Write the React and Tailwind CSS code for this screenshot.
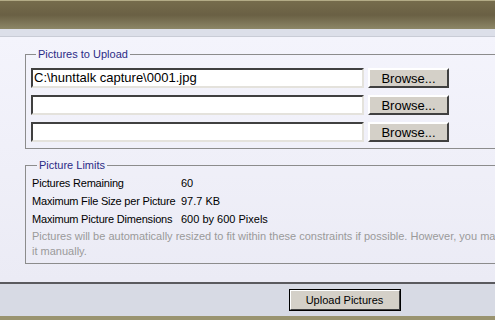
export default function App() {
  const rows = [
    ["Pictures Remaining", "60"],
    ["Maximum File Size per Picture", "97.7 KB"],
    ["Maximum Picture Dimensions", "600 by 600 Pixels"],
  ];

  const files = ["C:\\hunttalk capture\\0001.jpg", "", ""];

  return (
    <div className="w-[495px] h-[320px] overflow-hidden bg-[#f2f2fa] font-['Liberation_Sans',Arial,sans-serif]">
      {/* header */}
      <div className="h-[29px] border-t border-[#b3ab86] bg-gradient-to-b from-[#766c4c] via-[#6a6044] to-[#8d8767]" />
      <div className="h-[8px] bg-[#dcdfe9] border-b border-[#c9ccd6]" />

      {/* main */}
      <div className="h-[245px] bg-gradient-to-b from-[#f4f4fc] to-[#ebebf5] pl-[25px] pt-[11px]">
        <fieldset className="w-[520px] border border-[#8c8c8c] pl-[5px] pt-[7px] pb-[6px]">
          <legend className="ml-[5px] px-[2px] text-[11px] leading-[13px] text-[#2b2b86]">
            Pictures to Upload
          </legend>
          <div className="flex flex-col gap-[7px]">
            {files.map((f, i) => (
              <div key={i} className="flex items-center gap-[4px]">
                <div className="w-[333px] h-[20px] bg-white border-2 border-t-[#404040] border-l-[#404040] border-b-[#e4e2dc] border-r-[#e4e2dc] flex items-center px-[1px] text-[13px] text-black">
                  {f}
                </div>
                <button className="w-[81px] h-[20px] bg-[#d4d0c8] border-2 border-t-white border-l-white border-b-[#404040] border-r-[#404040] text-[13px] text-black leading-none">
                  Browse...
                </button>
              </div>
            ))}
          </div>
        </fieldset>

        <fieldset className="mt-[10px] w-[520px] border border-[#8c8c8c] pl-[6px] pt-[2px] pb-[4px] text-[11px]">
          <legend className="ml-[5px] px-[2px] text-[11px] leading-[13px] text-[#2b2b86]">
            Picture Limits
          </legend>
          {rows.map(([k, v]) => (
            <div key={k} className="flex h-[18px] items-center text-black whitespace-nowrap">
              <span className="w-[149px] shrink-0 tracking-[-0.2px]">{k}</span>
              <span>{v}</span>
            </div>
          ))}
          <p className="mt-[1px] leading-[15px] text-[#9a9a9a] whitespace-nowrap">
            Pictures will be automatically resized to fit within these constraints if possible. However, you may resize
            <br />
            it manually.
          </p>
        </fieldset>
      </div>

      {/* footer */}
      <div className="h-[34px] border-t-2 border-[#5a5a5e] bg-[#d7dae4] flex justify-center pt-[5px] pl-[194px]">
        <button className="w-[112px] h-[22px] bg-[#d4d0c8] border border-black text-[11px] text-black">
          <div className="h-full border border-t-white border-l-white border-b-[#404040] border-r-[#404040] flex items-center justify-center">
            Upload Pictures
          </div>
        </button>
      </div>
      <div className="h-[4px] bg-[#99936f]" />
    </div>
  );
}
